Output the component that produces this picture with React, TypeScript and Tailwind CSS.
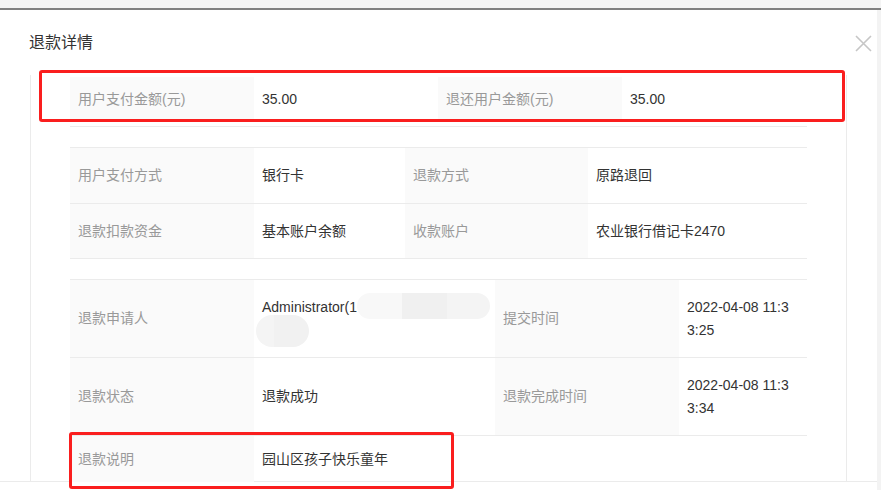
import React from "react";

const font = { fontFamily: '"Liberation Sans", "Noto Sans CJK SC", sans-serif' };

type Cell = { label: string; value: React.ReactNode };

function Label({ children }: { children: React.ReactNode }) {
  return (
    <div className="flex items-center bg-[#fafafa] px-2 text-[14px] leading-[23px] text-[#999]">
      {children}
    </div>
  );
}

function Value({ children, className = "" }: { children: React.ReactNode; className?: string }) {
  return (
    <div className={`relative flex items-center px-2 text-[14px] leading-[23px] text-[#333] break-all ${className}`}>
      <div>{children}</div>
    </div>
  );
}

function Row({ cells, cols, height, border = true }: { cells: Cell[]; cols: string; height: string; border?: boolean }) {
  return (
    <div className={`grid ${cols} ${height} ${border ? "border-b border-[#ebebeb]" : ""}`}>
      {cells.map((c) => (
        <React.Fragment key={c.label}>
          <Label>{c.label}</Label>
          <Value>{c.value}</Value>
        </React.Fragment>
      ))}
    </div>
  );
}

const cols4 = "grid-cols-[184px_184px_184px_185px]";
const colsMid = "grid-cols-[184px_151px_183px_219px]";
const colsWide = "grid-cols-[184px_241px_184px_128px]";

function Applicant() {
  return (
    <>
      Administrator(1
      <span className="absolute left-[103px] top-[13px] flex h-[26px] w-[133px] overflow-hidden rounded-full">
        <span className="w-[45px] bg-[#f8f8f8]" />
        <span className="w-[45px] bg-[#f0f0f0]" />
        <span className="flex-1 bg-[#f4f4f4]" />
      </span>
      <span className="absolute left-[2px] top-[35px] flex h-[32px] w-[53px] overflow-hidden rounded-full">
        <span className="w-[18px] bg-[#f4f4f4]" />
        <span className="flex-1 bg-[#f1f1f1]" />
      </span>
      <br />
      &nbsp;
    </>
  );
}

export default function App() {
  return (
    <div className="relative h-[490px] w-[881px] overflow-hidden bg-white" style={font}>
      <div className="h-[8px] bg-[#f4f4f4]" />
      <div className="h-[2px] bg-[#808080]" />
      <div className="flex">
        <div className="w-[877px]">
          {/* header */}
          <div className="flex items-center justify-between pl-[29px] pr-[5px] pt-[21px]">
            <h1 className="text-[16px] leading-[24px] text-[#333]">退款详情</h1>
            <svg width="17" height="17" viewBox="0 0 17 17" className="mt-[1px]">
              <path d="M1 1 L16 16 M16 1 L1 16" stroke="#c6c6c6" strokeWidth="1.6" fill="none" />
            </svg>
          </div>

          {/* panel */}
          <div className="mt-[20px] h-[407px] border-b border-[#ebebeb]">
            <div className="ml-[30px] h-full w-[817px] border-l border-r border-[#ebebeb] px-[39px] pt-[2px]">
              <Row
                cols={cols4}
                height="h-[45px]"
                border={false}
                cells={[
                  { label: "用户支付金额(元)", value: "35.00" },
                  { label: "退还用户金额(元)", value: "35.00" },
                ]}
              />
              <div className="h-[5px] border-b border-[#ebebeb]" />

              <div className="mt-[20px] border-t border-[#ebebeb]">
                <Row
                  cols={colsMid}
                  height="h-[56px]"
                  cells={[
                    { label: "用户支付方式", value: "银行卡" },
                    { label: "退款方式", value: "原路退回" },
                  ]}
                />
                <Row
                  cols={colsMid}
                  height="h-[55px]"
                  cells={[
                    { label: "退款扣款资金", value: "基本账户余额" },
                    { label: "收款账户", value: "农业银行借记卡2470" },
                  ]}
                />
              </div>

              <div className="mt-[20px] border-t border-[#ebebeb]">
                <Row
                  cols={colsWide}
                  height="h-[78px]"
                  cells={[
                    { label: "退款申请人", value: <Applicant /> },
                    { label: "提交时间", value: "2022-04-08 11:33:25" },
                  ]}
                />
                <Row
                  cols={colsWide}
                  height="h-[78px]"
                  cells={[
                    { label: "退款状态", value: "退款成功" },
                    { label: "退款完成时间", value: "2022-04-08 11:33:34" },
                  ]}
                />
                <div className={`grid ${colsWide} h-[46px]`}>
                  <Label>退款说明</Label>
                  <Value>园山区孩子快乐童年</Value>
                </div>
              </div>
            </div>
          </div>
        </div>
        <div className="h-[480px] w-[4px] bg-[#f3f3f3]" />
      </div>

      {/* annotation boxes */}
      <div className="pointer-events-none absolute left-[39px] top-[70px] h-[52px] w-[806px] rounded-[3px] border-[3px] border-[#fa1e1e]" />
      <div className="pointer-events-none absolute left-[69px] top-[432px] h-[57px] w-[385px] rounded-[3px] border-[3px] border-[#fa1e1e]" />
    </div>
  );
}
